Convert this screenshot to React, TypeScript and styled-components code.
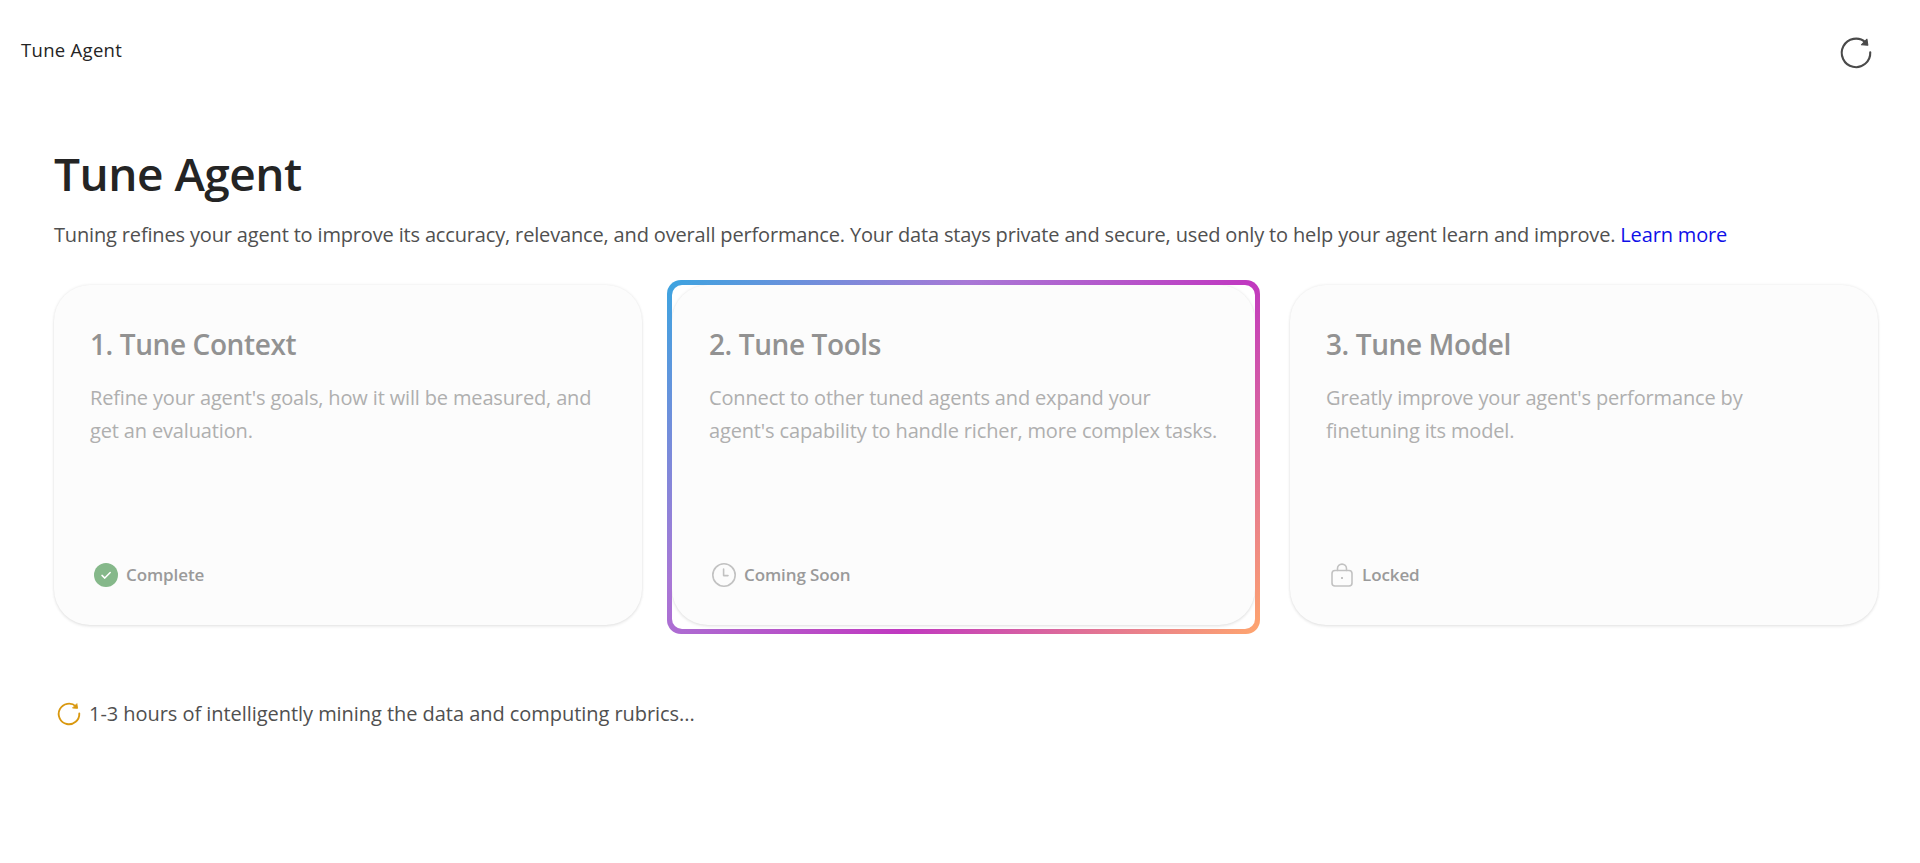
import React from "react";
import styled, { createGlobalStyle } from "styled-components";

const Global = createGlobalStyle`
  html, body { margin: 0; padding: 0; background: #fff; }
  body { font-family: "Open Sans", "Noto Sans", "Liberation Sans", sans-serif; }
`;

const Page = styled.div`
  width: 1920px;
  height: 863px;
  overflow: hidden;
  background: #fff;
`;

const TopBar = styled.header`
  display: flex;
  align-items: center;
  justify-content: space-between;
  height: 98px;
  padding: 0 44px 0 21px;
  box-sizing: border-box;
`;

const Crumb = styled.span`
  font-size: 18.5px;
  letter-spacing: 0.3px;
  color: #242424;
`;

const IconButton = styled.button`
  display: flex;
  width: 40px;
  height: 40px;
  margin-top: 8px;
  align-items: center;
  justify-content: center;
  padding: 0;
  border: 0;
  background: none;
  color: #4a4a4a;
`;

const Main = styled.main`
  padding: 47px 42px 0 54px;
`;

const Title = styled.h1`
  margin: 0;
  font-size: 46px;
  line-height: 56px;
  font-weight: 600;
  letter-spacing: -0.5px;
  color: #242424;
`;

const Intro = styled.p`
  margin: 20px 0 0;
  font-size: 20px;
  line-height: 28px;
  letter-spacing: -0.16px;
  color: #505050;
`;

const Link = styled.a`
  color: #0f0fe8;
  text-decoration: none;
`;

const Cards = styled.div`
  display: flex;
  align-items: flex-start;
  margin-top: 31px;
  height: 354px;
`;

const Card = styled.section`
  box-sizing: border-box;
  flex: none;
  width: ${(p) => p.$w}px;
  height: 340px;
  margin-top: ${(p) => p.$top}px;
  padding: 41px 36px 0 ${(p) => p.$left}px;
  display: flex;
  flex-direction: column;
  background: #fcfcfc;
  border-radius: 36px;
  box-shadow: 0 0 3px rgba(0, 0, 0, 0.1), 0 2px 3px rgba(0, 0, 0, 0.06);
`;

const Frame = styled.div`
  box-sizing: border-box;
  flex: none;
  width: 593px;
  height: 354px;
  margin: 0 30px 0 25px;
  padding: 5px;
  border-radius: 14px;
  background: linear-gradient(135deg, #3ca4e0 0%, #a878d6 32%, #c038c0 62%, #ffa66e 100%);
`;

const Inner = styled.div`
  width: 100%;
  height: 100%;
  border-radius: 10px;
  background: #fff;
  display: flex;
  align-items: flex-start;
  justify-content: center;
  overflow: hidden;
`;

const CardTitle = styled.h2`
  margin: 0;
  font-size: 28px;
  line-height: 36px;
  font-weight: 600;
  letter-spacing: -0.4px;
  color: #929292;
`;

const CardText = styled.p`
  margin: 19px 0 0;
  max-width: 510px;
  font-size: 20px;
  line-height: 33px;
  letter-spacing: -0.15px;
  color: #afafaf;
`;

const Status = styled.div`
  display: flex;
  align-items: center;
  gap: 7px;
  margin-top: auto;
  margin-bottom: 37px;
  margin-left: ${(p) => p.$inset}px;
  font-size: 17px;
  font-weight: 600;
  line-height: 24px;
  letter-spacing: -0.1px;
  color: #9a9a9a;
`;

const Progress = styled.div`
  display: flex;
  align-items: center;
  gap: 7px;
  margin-top: 66px;
  margin-left: 2px;
  font-size: 20px;
  line-height: 28px;
  letter-spacing: -0.05px;
  color: #505050;
`;

const Refresh = ({ size, color, width }: { size: number; color: string; width: number }) => (
  <svg width={size} height={size} viewBox="0 0 24 24" fill="none" stroke={color} strokeWidth={width} strokeLinecap="round">
    <path d="M21.5 11.5a9.5 9.5 0 1 1-3.1-6.6" />
    <path d="M19.3 2.8l.6 4-4.3-.3z" fill={color} strokeWidth={width / 2} strokeLinejoin="round" />
  </svg>
);

const Check = () => (
  <svg width="26" height="26" viewBox="0 0 26 26">
    <circle cx="13" cy="13" r="12" fill="#85b88a" />
    <path d="M9 13.4l2.8 2.7 5.4-5.6" fill="none" stroke="#fff" strokeWidth="1.5" strokeLinecap="round" strokeLinejoin="round" />
  </svg>
);

const Clock = () => (
  <svg width="26" height="26" viewBox="0 0 26 26" fill="none" stroke="#c2c2c2" strokeWidth="1.6" strokeLinecap="round" strokeLinejoin="round">
    <circle cx="13" cy="13" r="11.2" />
    <path d="M12.6 7v6.6h4.4" />
  </svg>
);

const Lock = () => (
  <svg width="26" height="26" viewBox="0 0 26 26" fill="none" stroke="#c2c2c2" strokeWidth="1.6" strokeLinecap="round">
    <rect x="3" y="8.5" width="20" height="15.5" rx="3" />
    <path d="M8.5 8.5V6.6a4.5 4.5 0 0 1 9 0v1.9" />
    <circle cx="13" cy="16" r="1" fill="#b0b0b0" stroke="none" />
  </svg>
);

export default function App() {
  return (
    <Page>
      <Global />
      <TopBar>
        <Crumb>Tune Agent</Crumb>
        <IconButton aria-label="Refresh">
          <Refresh size={36} color="#4a4a4a" width={1.4} />
        </IconButton>
      </TopBar>
      <Main>
        <Title>Tune Agent</Title>
        <Intro>
          Tuning refines your agent to improve its accuracy, relevance, and overall performance. Your data stays
          private and secure, used only to help your agent learn and improve. <Link href="#">Learn more</Link>
        </Intro>
        <Cards>
          <Card $w={588} $top={5} $left={36}>
            <CardTitle>1. Tune Context</CardTitle>
            <CardText>Refine your agent's goals, how it will be measured, and get an evaluation.</CardText>
            <Status $inset={3}><Check />Complete</Status>
          </Card>
          <Frame>
            <Inner>
              <Card $w={583} $top={0} $left={37}>
                <CardTitle>2. Tune Tools</CardTitle>
                <CardText>Connect to other tuned agents and expand your agent's capability to handle richer, more complex tasks.</CardText>
                <Status $inset={2}><Clock />Coming Soon</Status>
              </Card>
            </Inner>
          </Frame>
          <Card $w={588} $top={5} $left={36}>
            <CardTitle>3. Tune Model</CardTitle>
            <CardText>Greatly improve your agent's performance by finetuning its model.</CardText>
            <Status $inset={3}><Lock />Locked</Status>
          </Card>
        </Cards>
        <Progress>
          <Refresh size={26} color="#d9980f" width={1.7} />
          1-3 hours of intelligently mining the data and computing rubrics...
        </Progress>
      </Main>
    </Page>
  );
}
